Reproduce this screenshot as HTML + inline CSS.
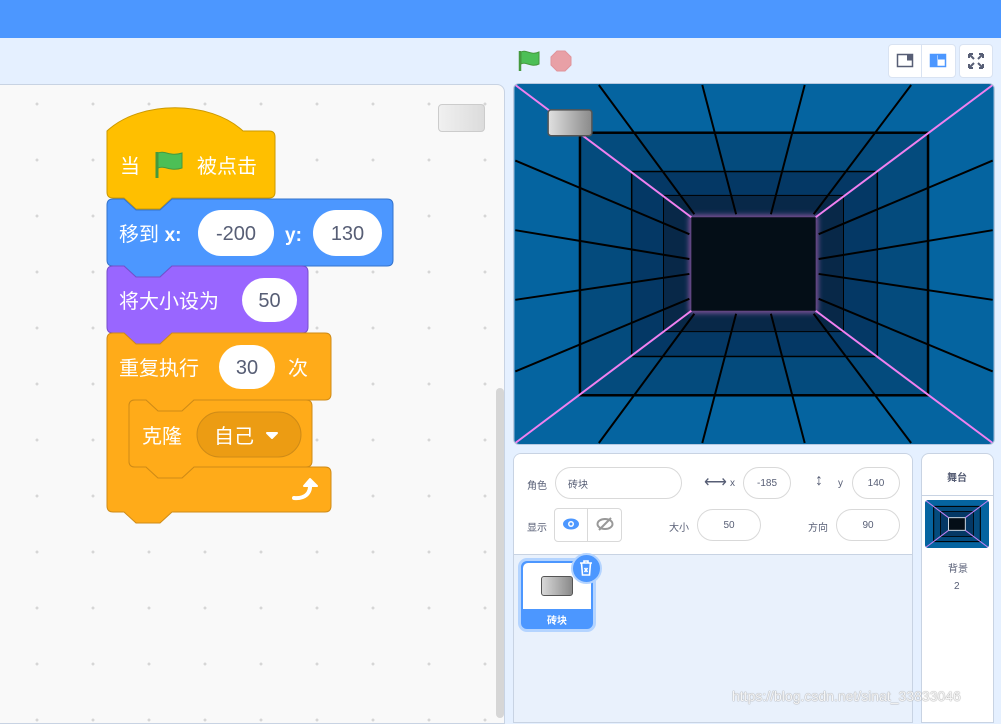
<!DOCTYPE html>
<html><head><meta charset="utf-8"><style>
*{margin:0;padding:0;box-sizing:border-box}
body{width:1001px;height:716px;overflow:hidden;background:#e5f0ff;font-family:"Liberation Sans","Noto Sans CJK SC",sans-serif;position:relative}
.a{position:absolute}
.top{left:0;top:0;width:1001px;height:38px;background:#4c97ff}
.code{left:-2px;top:84px;width:507px;height:640px;background-color:#f9f9f9;border:1px solid #c8d3e3;border-radius:0 8px 0 0;
background-image:radial-gradient(circle,#d6d6d6 1.3px,transparent 1.6px);background-size:56px 56px;background-position:10px -9px}
.lbl{font-size:10px;color:#575e75}
.inp{border:1px solid #d9d9d9;border-radius:16px;background:#fff;font-size:10px;color:#575e75;display:flex;align-items:center;justify-content:center}
.bt{color:#fff;font-size:20px;line-height:20px}
.ov{background:#fff;border-radius:23px;color:#575e75;font-size:20px;display:flex;align-items:center;justify-content:center;padding-top:2px}
</style></head><body>
<div class="a top"></div>
<div class="a code"></div>
<div class="a" style="left:438px;top:104px;width:47px;height:28px;border:1px solid #ccc;border-radius:4px;background:linear-gradient(90deg,#f0f0f0,#dcdcdc)"></div>
<div class="a" style="left:496px;top:388px;width:8px;height:330px;background:#d6d6d6;border-radius:4px"></div>

<svg class="a" style="left:0;top:0" width="505" height="716">
<path d="M107,131 C140,100 210,100 243,131 H269 Q275,131 275,137 V192 Q275,198 269,198 H172 L160,209 H136 L124,198 H113 Q107,198 107,192 Z" fill="#ffbf00" stroke="#cc9900"/>
<path d="M113,199 H124 L136,210 H160 L172,199 H387 Q393,199 393,205 V260 Q393,266 387,266 H172 L160,277 H136 L124,266 H113 Q107,266 107,260 V205 Q107,199 113,199Z" fill="#4c97ff" stroke="#3373cc"/>
<path d="M113,266 H124 L136,277 H160 L172,266 H302 Q308,266 308,272 V327 Q308,333 302,333 H172 L160,344 H136 L124,333 H113 Q107,333 107,327 V272 Q107,266 113,266Z" fill="#9966ff" stroke="#774dcb"/>
<path d="M113,333 H124 L136,344 H160 L172,333 H325 Q331,333 331,339 V394 Q331,400 325,400 H194 L182,411 H158 L146,400 H135 Q129,400 129,406 V461 Q129,467 135,467 H146 L158,478 H182 L194,467 H325 Q331,467 331,473 V506 Q331,512 325,512 H172 L160,523 H136 L124,512 H113 Q107,512 107,506 V339 Q107,333 113,333Z" fill="#ffab19" stroke="#cf8b17"/>
<path d="M135,400 H146 L158,411 H182 L194,400 H306 Q312,400 312,406 V461 Q312,467 306,467 H194 L182,478 H158 L146,467 H135 Q129,467 129,461 V406 Q129,400 135,400Z" fill="#ffab19" stroke="#cf8b17"/>
<rect x="197" y="412" width="104" height="45" rx="22.5" fill="#ec9c13" stroke="#cf8b17"/>
<path d="M267,433 h10 l-5,5 z" fill="#fff" stroke="#fff" stroke-width="2" stroke-linejoin="round"/>
<path d="M157,152 V178" stroke="#45993d" stroke-width="3"/>
<path d="M158,153 C165,150 170,157 182,153 V168 C170,172 165,165 158,168 Z" fill="#4cbf56" stroke="#45993d"/>
<path d="M294,498 C304,499 311,494 310,484" stroke="#fff" stroke-width="4" fill="none" stroke-linecap="round"/>
<path d="M304,486 L310,479 L317,486 Z" fill="#fff" stroke="#fff" stroke-width="2" stroke-linejoin="round"/>
</svg>
<div class="a bt" style="left:120px;top:157px">当</div>
<div class="a bt" style="left:197px;top:157px">被点击</div>
<div class="a bt" style="left:119px;top:225px">移到 <b style="font-size:19px">x:</b></div>
<div class="a ov" style="left:198px;top:210px;width:76px;height:46px">-200</div>
<div class="a bt" style="left:285px;top:225px"><b style="font-size:19px">y:</b></div>
<div class="a ov" style="left:313px;top:210px;width:69px;height:46px">130</div>
<div class="a bt" style="left:119px;top:292px">将大小设为</div>
<div class="a ov" style="left:242px;top:278px;width:55px;height:44px">50</div>
<div class="a bt" style="left:119px;top:359px">重复执行</div>
<div class="a ov" style="left:219px;top:345px;width:56px;height:44px">30</div>
<div class="a bt" style="left:288px;top:359px">次</div>
<div class="a bt" style="left:142px;top:427px">克隆</div>
<div class="a bt" style="left:214px;top:427px">自己</div>

<svg class="a" style="left:516px;top:48px" width="60" height="26">
<path d="M4,3 V23" stroke="#45993d" stroke-width="2.5"/>
<path d="M5,4 C10,1 15,8 23,4 V16 C15,20 10,13 5,16 Z" fill="#4cbf56" stroke="#45993d"/>
<polygon points="41,3 49,3 55,9 55,17 49,23 41,23 35,17 35,9" fill="#e8a0a6" stroke="#e0949b"/>
</svg>
<div class="a" style="left:888px;top:44px;width:68px;height:34px;background:#fff;border:1px solid #d9e3f2;border-radius:4px"></div>
<div class="a" style="left:921px;top:44px;width:1px;height:34px;background:#d9e3f2"></div>
<svg class="a" style="left:896px;top:52px" width="20" height="18"><rect x="1.5" y="2.5" width="15" height="12" fill="none" stroke="#575e75" stroke-width="1.5"/><rect x="11" y="2.5" width="5" height="6" fill="#575e75"/></svg>
<svg class="a" style="left:929px;top:52px" width="20" height="18"><rect x="1.5" y="2.5" width="15" height="12" fill="#fff" stroke="#4c97ff" stroke-width="1.5"/><rect x="1.5" y="2.5" width="7" height="12" fill="#4c97ff"/><rect x="9" y="2.5" width="7.5" height="5" fill="#4c97ff"/></svg>
<div class="a" style="left:959px;top:44px;width:34px;height:34px;background:#fff;border:1px solid #d9e3f2;border-radius:4px"></div>
<svg class="a" style="left:967px;top:52px" width="18" height="18" stroke="#575e75" stroke-width="2" fill="none"><path d="M2,2 L7,7 M2,2 h4 M2,2 v4 M16,2 L11,7 M16,2 h-4 M16,2 v4 M2,16 L7,11 M2,16 h4 M2,16 v-4 M16,16 L11,11 M16,16 h-4 M16,16 v-4"/></svg>

<svg class="a" style="left:513px;top:83px;border-radius:6px;overflow:hidden;border:1px solid #b8c9e0" width="482" height="362" viewBox="-1 -1 482 362">
<defs><filter id="g"><feGaussianBlur stdDeviation="3"/></filter>
<linearGradient id="sg"><stop offset="0" stop-color="#e0e0e0"/><stop offset="1" stop-color="#8a8a8a"/></linearGradient></defs>
<rect x="-1" y="-1" width="482" height="362" fill="#0564a0"/>
<rect x="65" y="48" width="350" height="264" fill="#044b7d"/>
<rect x="117" y="87" width="247" height="186" fill="#043865"/>
<rect x="149" y="111" width="181" height="137" fill="#082848"/>
<rect x="177" y="133" width="125" height="94" fill="#0c0f1f" stroke="#c070d0" stroke-width="3" filter="url(#g)"/>
<rect x="177" y="133" width="125" height="94" fill="#040e17"/>
<g stroke="#000" stroke-width="2" fill="none">
<rect x="65" y="48" width="350" height="264" stroke-width="2.5"/>
<rect x="117" y="87" width="247" height="186" stroke-width="1.5"/>
<rect x="149" y="111" width="181" height="137" stroke-width="1"/>
<path d="M84,0 L180,130 M188,0 L222,130 M291,0 L257,130 M398,0 L300,130 M84,360 L180,230 M188,360 L222,230 M291,360 L257,230 M398,360 L300,230 M0,76 L175,150 M0,146 L175,175 M0,216 L175,190 M0,288 L175,215 M480,76 L305,150 M480,146 L305,175 M480,216 L305,190 M480,288 L305,215"/>
</g>
<g stroke="#f080f0" stroke-width="2"><path d="M0,0 L177,133 M480,0 L302,133 M0,360 L177,227 M480,360 L302,227"/></g>
<rect x="33" y="25" width="44" height="26" rx="3" fill="url(#sg)" stroke="#555" stroke-width="1.5"/>
</svg>

<div class="a" style="left:513px;top:453px;width:400px;height:270px;background:#e9f1fc;border:1px solid #c8d3e3;border-radius:8px 8px 0 0;overflow:hidden">
<div style="height:101px;background:#fff;border-bottom:1px solid #c8d3e3"></div></div>
<div class="a lbl" style="left:527px;top:477px">角色</div>
<div class="a inp" style="left:555px;top:467px;width:127px;height:32px;justify-content:flex-start;padding-left:12px">砖块</div>
<div class="a lbl" style="left:704px;top:472px;font-size:16px">⟷</div>
<div class="a lbl" style="left:730px;top:478px">x</div>
<div class="a inp" style="left:743px;top:467px;width:48px;height:32px">-185</div>
<div class="a lbl" style="left:815px;top:472px;font-size:16px">↕</div>
<div class="a lbl" style="left:838px;top:478px">y</div>
<div class="a inp" style="left:852px;top:467px;width:48px;height:32px">140</div>
<div class="a lbl" style="left:527px;top:519px">显示</div>
<div class="a" style="left:554px;top:508px;width:68px;height:34px;border:1px solid #d9d9d9;border-radius:4px;background:#fff"></div>
<div class="a" style="left:587px;top:508px;width:1px;height:34px;background:#d9d9d9"></div>
<svg class="a" style="left:562px;top:517px" width="18" height="14"><ellipse cx="9" cy="7" rx="8" ry="5.5" fill="#4c97ff"/><circle cx="9" cy="7" r="3" fill="#fff"/><circle cx="9" cy="7" r="1.5" fill="#4c97ff"/></svg>
<svg class="a" style="left:596px;top:516px" width="18" height="16"><ellipse cx="9" cy="8" rx="7.5" ry="5" fill="none" stroke="#999" stroke-width="2"/><path d="M3,14 L15,2" stroke="#999" stroke-width="2"/></svg>
<div class="a lbl" style="left:669px;top:519px">大小</div>
<div class="a inp" style="left:697px;top:509px;width:64px;height:32px">50</div>
<div class="a lbl" style="left:808px;top:519px">方向</div>
<div class="a inp" style="left:836px;top:509px;width:64px;height:32px">90</div>
<div class="a" style="left:518px;top:558px;width:78px;height:74px;border:3px solid #b4d4ff;border-radius:9px;background:#4c97ff;overflow:hidden">
<div style="height:46px;background:#fff;margin:2px 2px 0;border-radius:5px 5px 0 0"></div>
<div style="color:#fff;font-size:10px;text-align:center;font-weight:bold;margin-top:3px">砖块</div></div>
<div class="a" style="left:541px;top:576px;width:32px;height:20px;border-radius:3px;border:1px solid #555;background:linear-gradient(90deg,#d8d8d8,#8a8a8a)"></div>
<div class="a" style="left:571px;top:553px;width:31px;height:31px;border-radius:50%;background:#4c97ff;border:2px solid #b4d4ff"></div>
<svg class="a" style="left:578px;top:559px" width="16" height="18" fill="none" stroke="#fff" stroke-width="1.6"><path d="M2,4 H14 M6,4 V2 H10 V4 M3.5,4 L4.5,16 H11.5 L12.5,4 M6.5,9 L9.5,13 M9.5,9 L6.5,13"/></svg>

<div class="a" style="left:921px;top:453px;width:73px;height:270px;background:#fff;border:1px solid #c8d3e3;border-radius:8px 8px 0 0"></div>
<div class="a" style="left:921px;top:495px;width:73px;height:1px;background:#c8d3e3"></div>
<div class="a lbl" style="left:947px;top:469px;font-weight:bold">舞台</div>
<svg class="a" style="left:925px;top:500px;border-radius:3px" width="64" height="48" viewBox="0 0 480 360">
<rect width="480" height="360" fill="#0564a0"/><rect x="65" y="48" width="350" height="264" fill="#044b7d" stroke="#000" stroke-width="8"/><rect x="117" y="87" width="247" height="186" fill="#043865" stroke="#000" stroke-width="6"/><rect x="177" y="133" width="125" height="94" fill="#040e17" stroke="#fff" stroke-width="6"/>
<path d="M0,0 L177,133 M480,0 L302,133 M0,360 L177,227 M480,360 L302,227" stroke="#c080f0" stroke-width="8"/></svg>
<div class="a lbl" style="left:948px;top:560px">背景</div>
<div class="a lbl" style="left:954px;top:581px">2</div>

<div class="a" style="left:732px;top:688px;font-size:14px;color:rgba(255,255,255,0.9);text-shadow:0 0 1px #999,0 0 1px #999">https://blog.csdn.net/sinat_33833046</div>
</body></html>
